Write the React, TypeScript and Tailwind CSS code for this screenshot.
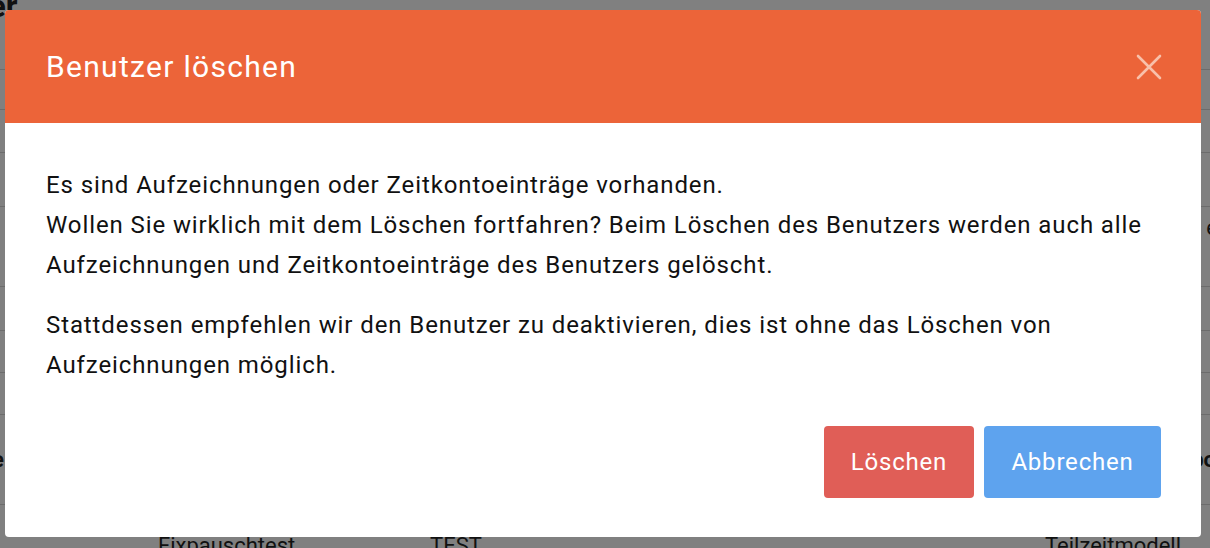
import React from "react";

const rowHeights = [70, 40, 43, 54, 80, 44, 42, 42];

export default function App() {
  return (
    <div className="relative w-[1210px] h-[548px] overflow-hidden bg-[#808080] font-['Roboto','Liberation_Sans',sans-serif] text-[#111]">
      {/* background page (dimmed) */}
      <div className="flex flex-col">
        <div className="h-0 overflow-visible">
          <div className="-ml-[112px] -mt-[14px] text-[32px] font-bold leading-tight">Benutzer</div>
        </div>
        {rowHeights.map((h, i) => (
          <div key={i} className="border-b border-[#6c6c6c] flex justify-end items-start" style={{ height: h }}>
            {i === 4 ? <span className="-mr-[8px] mt-[6px] text-[22px] leading-[30px]">e</span> : null}
          </div>
        ))}
        <div className="h-[90px] border-b border-[#6c6c6c] flex justify-between items-center text-[22px] font-bold">
          <span className="-ml-[8px]">e</span>
          <span className="-mr-[6px]">bo</span>
        </div>
        <div className="h-[60px] flex items-start pt-[24px] text-[22px] leading-[33px]">
          <span className="ml-[158px] w-[272px]">Fixpauschtest</span>
          <span className="w-[615px]">TEST</span>
          <span>Teilzeitmodell</span>
        </div>
      </div>

      {/* modal */}
      <div className="absolute left-[5px] top-[10px] w-[1196px] h-[527px] rounded-[4px] bg-white overflow-hidden flex flex-col">
        <div className="h-[113px] shrink-0 bg-[#ec6439] flex items-center justify-between pl-[41px] pr-[40px]">
          <h2 className="text-[30px] tracking-[1.3px] text-white font-normal leading-none">Benutzer löschen</h2>
          <svg width="26" height="26" viewBox="0 0 26 26" className="-mr-[1px]">
            <path d="M2 2 L24 24 M24 2 L2 24" stroke="#f8c0aa" strokeWidth="2.6" strokeLinecap="round" />
          </svg>
        </div>
        <div className="flex-1 flex flex-col pl-[41px] pr-[40px] pt-[42px] pb-[39px] text-[24px] tracking-[0.9px] leading-[40px]">
          <p>
            Es sind Aufzeichnungen oder Zeitkontoeinträge vorhanden.
            <br />
            Wollen Sie wirklich mit dem Löschen fortfahren? Beim Löschen des Benutzers werden auch alle Aufzeichnungen und Zeitkontoeinträge des Benutzers gelöscht.
          </p>
          <p className="mt-[20px]">
            Stattdessen empfehlen wir den Benutzer zu deaktivieren, dies ist ohne das Löschen von Aufzeichnungen möglich.
          </p>
          <div className="mt-auto flex justify-end gap-[10px]">
            <button className="w-[150px] h-[72px] rounded-[4px] bg-[#e05e57] text-white text-[24px] tracking-[0.8px]">Löschen</button>
            <button className="w-[177px] h-[72px] rounded-[4px] bg-[#5ea3ee] text-white text-[24px] tracking-[0.8px]">Abbrechen</button>
          </div>
        </div>
      </div>
    </div>
  );
}
